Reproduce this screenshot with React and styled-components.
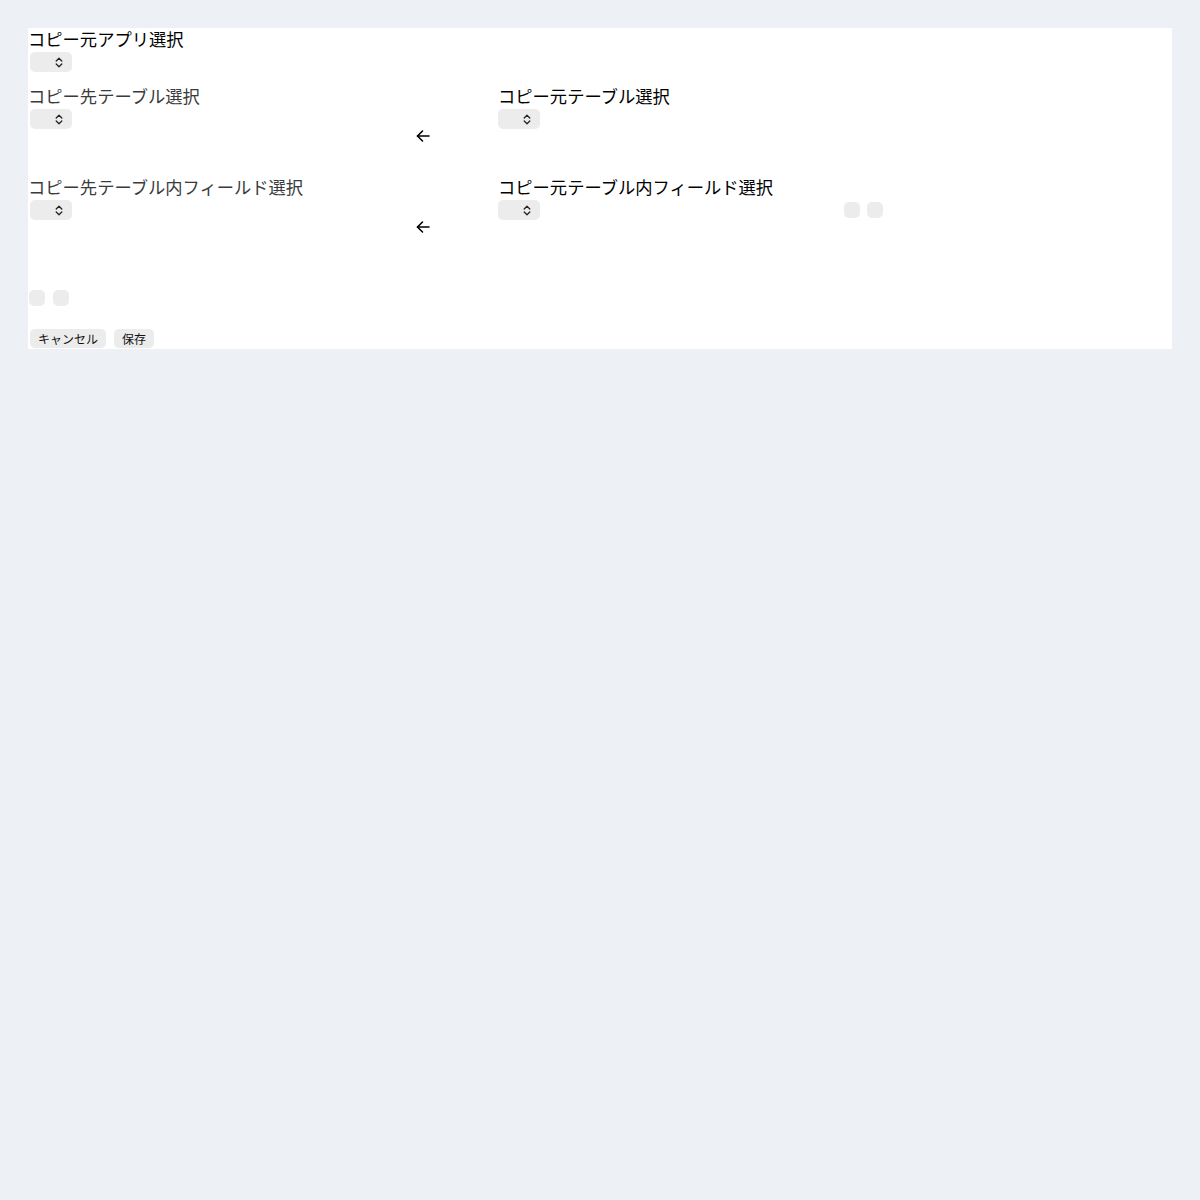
import React from 'react';
import styled, { createGlobalStyle } from 'styled-components';

const GlobalStyle = createGlobalStyle`
  html, body {
    margin: 0;
    padding: 0;
    background: #edf0f5;
  }
  body {
    padding: 28px;
    font-family: 'Noto Sans CJK JP', 'Noto Sans', sans-serif;
  }
`;

const Panel = styled.div`
  background: #fff;
  display: flex;
  flex-direction: column;
`;

const Label = styled.div`
  font-size: 17.3px;
  line-height: 21px;
  padding-bottom: 1px;
  color: ${(p) => (p.$muted ? '#3b3b3b' : '#000')};
  white-space: nowrap;
`;

const SelectBox = styled.div`
  width: 42px;
  height: 20px;
  margin: 2px 0 0 ${(p) => (p.$flush ? 0 : 2)}px;
  border-radius: 5px;
  background: #ececec;
  display: flex;
  align-items: center;
  justify-content: flex-end;
  padding-right: 9px;
  box-sizing: border-box;
`;

const Section = styled.div`
  margin-bottom: 13px;
`;

const MapRow = styled.div`
  display: grid;
  grid-template-columns: 387px 83px 346px auto;
  align-items: start;
  margin-bottom: ${(p) => p.$gap}px;
`;

const ArrowCell = styled.div`
  padding-top: 43px;
  height: 16px;
  display: flex;
`;

const Squares = styled.div`
  display: flex;
  gap: ${(p) => p.$gap}px;
  padding-top: ${(p) => p.$top || 0}px;
  padding-left: ${(p) => p.$left || 0}px;
`;

const Square = styled.div`
  width: 16px;
  height: 16px;
  border-radius: 5px;
  background: #ececec;
`;

const Footer = styled.div`
  display: flex;
  gap: 8px;
  padding: 23px 0 1px 2px;
`;

const Button = styled.button`
  font-family: 'Noto Sans CJK JP', sans-serif;
  font-size: 12px;
  line-height: 16px;
  color: #111;
  background: #ececec;
  border: none;
  border-radius: 5px;
  padding: 2px 8px 1px;
  margin: 0;
`;

const Chevrons = () => (
  <svg width="8" height="11" viewBox="0 0 8 11" fill="none" stroke="#222" strokeWidth="1.3" strokeLinecap="round" strokeLinejoin="round">
    <path d="M1.2 4 L4 1.3 L6.8 4" />
    <path d="M1.2 7 L4 9.7 L6.8 7" />
  </svg>
);

const Select = ({ flush }) => (
  <SelectBox $flush={flush}>
    <Chevrons />
  </SelectBox>
);

const ArrowLeft = () => (
  <svg width="16" height="16" viewBox="0 0 16 16" fill="none" stroke="#000" strokeWidth="1.6" strokeLinecap="round" strokeLinejoin="round">
    <path d="M14 8 H2.5" />
    <path d="M7.5 3 L2.5 8 L7.5 13" />
  </svg>
);

const rows = [
  { dest: 'コピー先テーブル選択', src: 'コピー元テーブル選択', gap: 32, extra: false },
  { dest: 'コピー先テーブル内フィールド選択', src: 'コピー元テーブル内フィールド選択', gap: 55, extra: true },
];

const App = () => (
  <>
    <GlobalStyle />
    <Panel>
      <Section>
        <Label>コピー元アプリ選択</Label>
        <Select />
      </Section>

      {rows.map((row) => (
        <MapRow key={row.dest} $gap={row.gap}>
          <div>
            <Label $muted>{row.dest}</Label>
            <Select />
          </div>
          <ArrowCell>
            <ArrowLeft />
          </ArrowCell>
          <div>
            <Label>{row.src}</Label>
            <Select flush />
          </div>
          {row.extra && (
            <Squares $top={26} $gap={7}>
              <Square />
              <Square />
            </Squares>
          )}
        </MapRow>
      ))}

      <Squares $left={1} $gap={8}>
        <Square />
        <Square />
      </Squares>

      <Footer>
        <Button>キャンセル</Button>
        <Button>保存</Button>
      </Footer>
    </Panel>
  </>
);

export default App;
